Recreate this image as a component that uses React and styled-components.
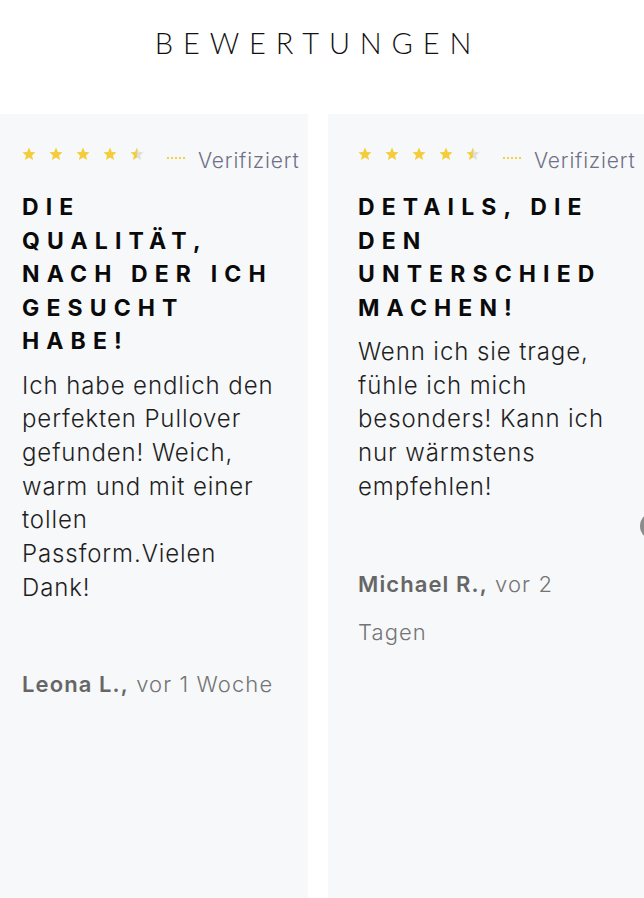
import React from "react";
import styled, { createGlobalStyle } from "styled-components";

const Global = createGlobalStyle`
  html, body { margin: 0; padding: 0; background: #ffffff; }
  body { overflow: hidden; font-family: "Inter", "Noto Sans", sans-serif; }
`;

const Page = styled.div`
  width: 644px;
  height: 898px;
  overflow: hidden;
  position: relative;
  background: #fff;
`;

const Title = styled.h2`
  margin: 0;
  padding: 28px 8px 0 0;
  height: 114px;
  box-sizing: border-box;
  text-align: center;
  font-family: "Lato", sans-serif;
  font-weight: 300;
  font-size: 29px;
  line-height: 30px;
  letter-spacing: 0.34em;
  color: #111;
`;

const Track = styled.div`
  display: flex;
  gap: 20px;
  margin-left: -8px;
`;

const Card = styled.article`
  flex: 0 0 316px;
  box-sizing: border-box;
  min-height: 800px;
  padding: 30px 30px 0 30px;
  background: #f7f8fa;
  display: flex;
  flex-direction: column;
`;

const Meta = styled.div`
  display: flex;
  align-items: center;
  height: 28px;
  margin-right: -23px;
  white-space: nowrap;
`;

const Stars = styled.div`
  display: flex;
  gap: 13px;
  margin-top: -8px;
`;

const Dots = styled.span`
  width: 21px;
  height: 2px;
  margin: 0 11px 0 22px;
  background-image: radial-gradient(circle, #f3cf4a 0.7px, transparent 1px);
  background-size: 4px 2px;
  background-repeat: repeat-x;
`;

const Verified = styled.span`
  font-family: "Inter", sans-serif;
  font-weight: 300;
  font-size: 21px;
  letter-spacing: 0.8px;
  color: #6f6f86;
  margin-top: 4px;
`;

const Heading = styled.h3`
  margin: 19px 0 0;
  font-family: "Inter", sans-serif;
  font-weight: 700;
  font-size: 23px;
  line-height: 33.5px;
  letter-spacing: 0.31em;
  color: #0a0a0a;
`;

const Body = styled.p`
  margin: 10px 0 0;
  font-family: "Inter", sans-serif;
  font-weight: 300;
  font-size: 24px;
  letter-spacing: 0.9px;
  line-height: 33.7px;
  color: #1f1f1f;
`;

const Author = styled.p`
  margin: 56px 0 0;
  font-family: "Inter", sans-serif;
  font-weight: 300;
  font-size: 22px;
  letter-spacing: 1.1px;
  line-height: 48px;
  color: #747474;
`;

const Name = styled.b`
  font-weight: 600;
  color: #666;
`;

const NavButton = styled.div`
  position: absolute;
  left: 640px;
  top: 512px;
  width: 28px;
  height: 28px;
  border-radius: 50%;
  background: #8c8c8c;
`;

const Star = ({ fill = 1 }) => {
  const id = `half-${Math.random().toString(36).slice(2)}`;
  const d =
    "M7 0.6l1.9 4.3 4.6.4-3.5 3.1 1.1 4.6L7 10.6 2.9 13l1.1-4.6L.5 5.3l4.6-.4z";
  return (
    <svg width="14" height="14" viewBox="0 0 14 14">
      <defs>
        <linearGradient id={id} x1="0" x2="1" y1="0" y2="0">
          <stop offset={fill} stopColor="#f5cd3b" />
          <stop offset={fill} stopColor="#dedede" />
        </linearGradient>
      </defs>
      <path d={d} fill={`url(#${id})`} />
    </svg>
  );
};

const reviews = [
  {
    title: "DIE QUALITÄT, NACH DER ICH GESUCHT HABE!",
    text: "Ich habe endlich den perfekten Pullover gefunden! Weich, warm und mit einer tollen Passform.Vielen Dank!",
    name: "Leona L.,",
    when: "vor 1 Woche",
  },
  {
    title: "DETAILS, DIE DEN UNTERSCHIED MACHEN!",
    text: "Wenn ich sie trage, fühle ich mich besonders! Kann ich nur wärmstens empfehlen!",
    name: "Michael R.,",
    when: "vor 2 Tagen",
  },
];

export default function App() {
  return (
    <Page>
      <Global />
      <Title>BEWERTUNGEN</Title>
      <Track>
        {reviews.map((r) => (
          <Card key={r.name}>
            <Meta>
              <Stars>
                <Star />
                <Star />
                <Star />
                <Star />
                <Star fill={0.5} />
              </Stars>
              <Dots />
              <Verified>Verifiziert</Verified>
            </Meta>
            <Heading>{r.title}</Heading>
            <Body>{r.text}</Body>
            <Author>
              <Name>{r.name}</Name> {r.when}
            </Author>
          </Card>
        ))}
      </Track>
      <NavButton />
    </Page>
  );
}
